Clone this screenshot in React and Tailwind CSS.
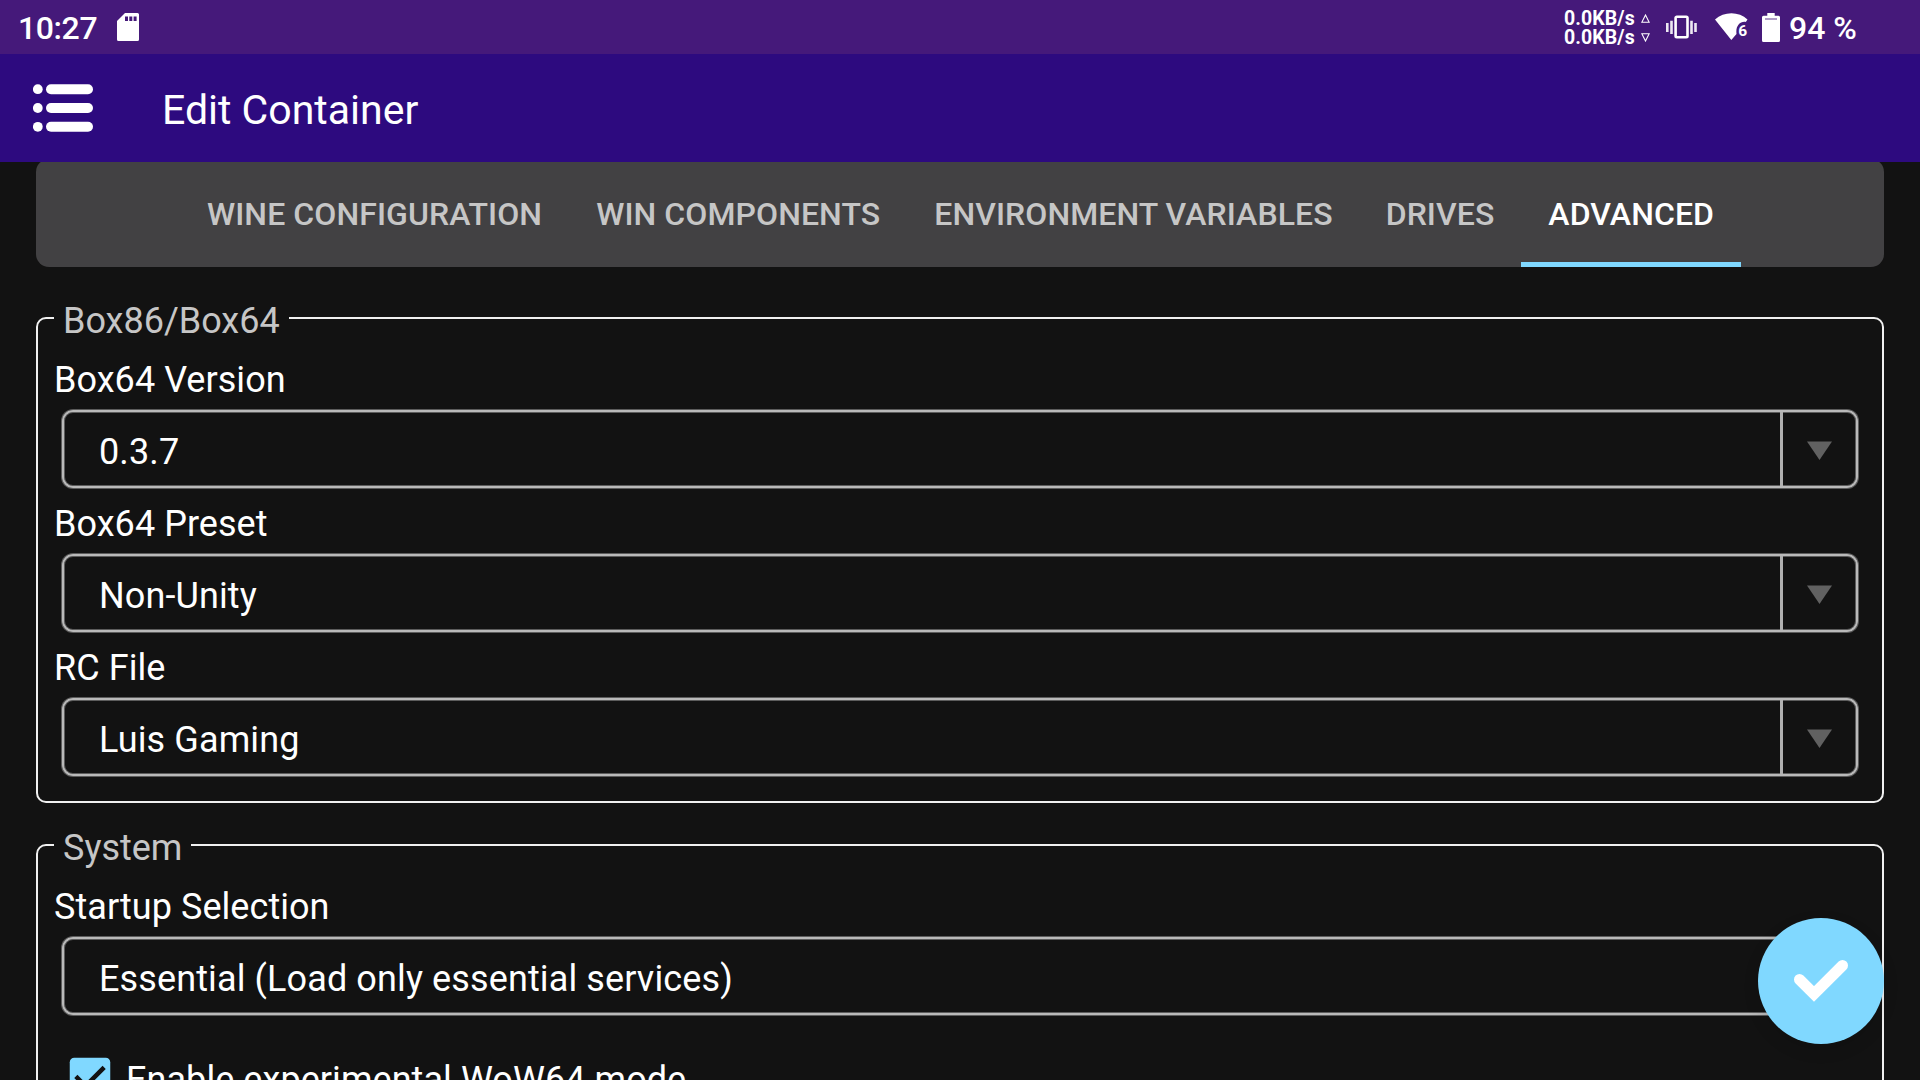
const TABS = ["WINE CONFIGURATION", "WIN COMPONENTS", "ENVIRONMENT VARIABLES", "DRIVES", "ADVANCED"];

function StatusBar() {
  return (
    <div className="flex h-[54px] shrink-0 items-center bg-[#45197a] pl-[18px] pr-16 font-medium">
      <span className="mt-[2px] w-[99px] text-[32px] leading-[38px] tracking-[-0.4px]">10:27</span>
      <svg className="h-7 w-[22px]" viewBox="0 0 22 28" fill="#fff">
        <path fillRule="evenodd" d="M8 0H20.500Q22 0 22 1.500V26.500Q22 28 20.500 28H1.500Q0 28 0 26.500V8ZM8 3.500v4.500h3V3.500ZM12.300 3.500v4.500h3V3.500ZM16.600 3.500v4.500h3V3.500Z" />
      </svg>
      <div className="ml-auto flex items-center">
        <div className="mt-[2px] flex flex-col text-[19.500px] font-bold">
          {[true, false].map((up) => (
            <div key={String(up)} className="flex h-[19px] items-center">
              <span className="w-[77px] whitespace-nowrap leading-[19px] tracking-[0.1px]">0.0KB/s</span>
              <svg className="h-[9px] w-[9px]" viewBox="0 0 9 9" fill="none" stroke="#fff" strokeWidth="1.100">
                <path d={up ? "M4.500 1 8.200 8.300H.8Z" : "M4.500 8 8.200.7H.8Z"} />
              </svg>
            </div>
          ))}
        </div>
        <svg className="ml-[15px] h-6 w-8" viewBox="0 0 32 24" fill="none" stroke="#fff">
          <rect x="10.600" y="1.800" width="11.900" height="20.400" rx="1.200" strokeWidth="2.600" />
          <path d="M2.300 8v9M6.500 5.700v13.300M26.500 5.700v13.300M30.500 8v9" strokeWidth="2.600" strokeOpacity="0.9" />
        </svg>
        <svg className="ml-[18px] h-7 w-[34px]" viewBox="0 0 34 28" fill="#fff">
          <path d="M0 6.500C9-1.800 24-1.800 32.500 6.500L30.800 9C25 8 20.500 13 21.500 21L16.300 27Z" />
          <text x="23.200" y="22.500" fontSize="15.500" fontWeight="700" fontFamily="Roboto, sans-serif">6</text>
        </svg>
        <svg className="ml-[13px] h-[29px] w-[18px]" viewBox="0 0 18 29" fill="#fff">
          <path d="M5.300 0h7.400v2.800H16.500Q18 2.800 18 4.300V27.500Q18 29 16.500 29H1.500Q0 29 0 27.500V4.300Q0 2.800 1.500 2.800H5.300Z" />
          <path d="M3 6h12" stroke="#9a80b8" strokeWidth="1.600" />
        </svg>
        <span className="ml-[9px] mt-[2px] w-[67px] whitespace-nowrap text-[32px] leading-[38px]">94 %</span>
      </div>
    </div>
  );
}

function AppBar() {
  return (
    <header className="relative z-10 flex h-[108px] shrink-0 items-center bg-[#2d0a7f] pl-[33px]">
      <svg className="h-12 w-[60px]" viewBox="0 0 60 48" fill="#fff">
        {[5.200, 24, 42.800].map((y) => (
          <g key={y}>
            <circle cx="4.800" cy={y} r="4.900" />
            <rect x="13" y={y - 5} width="47" height="10" rx="5" />
          </g>
        ))}
      </svg>
      <h1 className="ml-[69px] mt-[3px] text-[41px] leading-[48px]">Edit Container</h1>
    </header>
  );
}

function Tabs() {
  return (
    <nav className="-mt-[3px] flex h-[108px] shrink-0 justify-center rounded-[13px] bg-[#424143] pl-px text-[32px] font-medium tracking-[0.08px] text-[#c6c6c6]">
      {TABS.map((tab) => (
        <div
          key={tab}
          className={
            tab === "ADVANCED"
              ? "flex items-center whitespace-nowrap border-b-[5px] border-[#80d8ff] px-[27px] pt-[6px] text-white"
              : tab === "DRIVES"
                ? "-ml-px flex items-center whitespace-nowrap px-[27px] pt-px"
                : "flex items-center whitespace-nowrap px-[27px] pt-px"
          }
        >
          {tab}
        </div>
      ))}
    </nav>
  );
}

function Field({ label, value }) {
  return (
    <div className="mb-[12px]">
      <div className="ml-4 h-12 text-[36px] leading-[48px] tracking-[0.05px]">{label}</div>
      <div className="ml-6 mr-6 mt-[6px] flex h-[78px] rounded-[11px] border-2 border-[#b9b9b9] shadow-[0_0_0_1px_#5c5c5c,inset_0_0_0_1px_#5c5c5c]">
        <div className="flex-1 pl-[35px] pt-[16px] text-[36px] leading-[48px] tracking-[0.12px]">{value}</div>
        <div className="flex w-[76px] items-center justify-center border-l-[3px] border-[#b0b0b0] pt-[2px]">
          <svg className="h-[19px] w-[25px]" viewBox="0 0 25 19">
            <path d="M0 .5h25L12.500 19Z" fill="#616161" />
          </svg>
        </div>
      </div>
    </div>
  );
}

function Group({ title, children, className }) {
  return (
    <section className={className}>
      <h2 className="absolute -top-[20px] left-4 bg-[#121212] pl-[9px] pr-[9px] text-[36px] leading-[44px] text-[#c6c6c6]">{title}</h2>
      {children}
    </section>
  );
}

export default function App() {
  return (
    <div className="relative flex h-[1080px] w-[1920px] flex-col overflow-hidden bg-[#121212] font-['Roboto',sans-serif] text-white">
      <StatusBar />
      <AppBar />
      <main className="flex flex-col px-9">
        <Tabs />
        <Group title="Box86/Box64" className="relative mt-[50px] h-[486px] rounded-[10px] border-2 border-[#f0f0f0] pt-[37px]">
          <Field label="Box64 Version" value="0.3.7" />
          <Field label="Box64 Preset" value="Non-Unity" />
          <Field label="RC File" value="Luis Gaming" />
        </Group>
        <Group title="System" className="relative mt-[41px] h-[486px] rounded-[10px] border-2 border-[#f0f0f0] pt-[37px]">
          <Field label="Startup Selection" value="Essential (Load only essential services)" />
          <div className="mt-[36px] flex items-center pl-[25px]">
            <svg className="h-[54px] w-[54px]" viewBox="0 0 24 24">
              <rect x="3" y="3" width="18" height="18" rx="2" fill="#80d8ff" />
              <path d="M10 17l-5-5 1.410-1.410L10 14.170l7.590-7.590L19 8l-9 9z" fill="#121212" />
            </svg>
            <span className="ml-[9px] mt-[3px] text-[36px] leading-[48px] tracking-[0.06px]">Enable experimental WoW64 mode</span>
          </div>
        </Group>
      </main>
      <button className="absolute bottom-9 right-9 flex h-[126px] w-[126px] items-center justify-center rounded-full bg-[#80d8ff] shadow-[0_6px_16px_rgba(0,0,0,0.12)]">
        <svg className="h-[126px] w-[126px]" viewBox="0 0 126 126" fill="none" stroke="#fff" strokeWidth="11" strokeLinecap="round">
          <path d="M41.500 61.500 56 76 84.500 47.500" />
        </svg>
      </button>
    </div>
  );
}
